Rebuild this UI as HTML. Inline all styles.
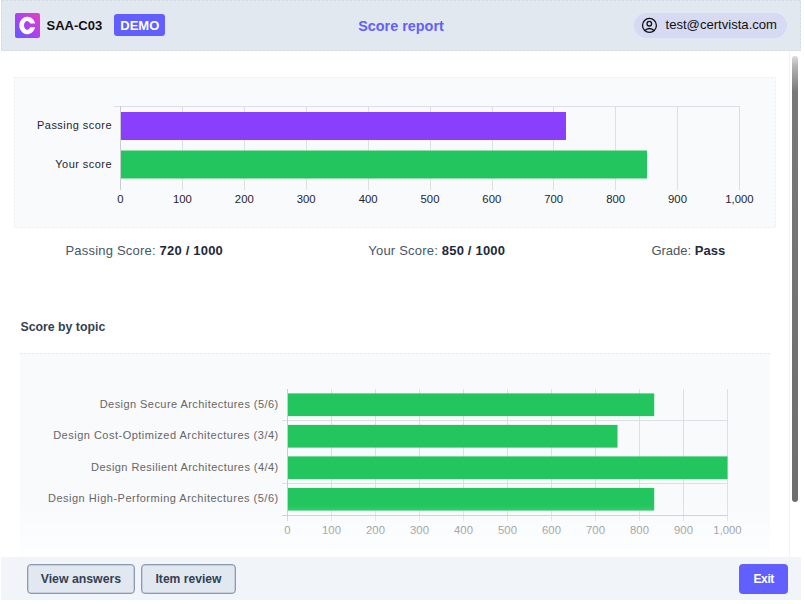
<!DOCTYPE html>
<html>
<head>
<meta charset="utf-8">
<style>
html,body{margin:0;padding:0;width:805px;height:604px;overflow:hidden;background:#fff;font-family:"Liberation Sans",sans-serif;}
.abs{position:absolute;}
#header{left:1px;top:0;width:800px;height:51px;background:#e2e8f0;}
#logo{left:15px;top:13px;width:25px;height:25px;border-radius:2px;background:linear-gradient(45deg,#5a5cff 0%,#a742f5 45%,#e93fc0 100%);}
#badge{left:114px;top:14px;width:51px;height:22px;border-radius:3px;background:#615fff;}
#pill{left:634px;top:13px;width:153px;height:25px;border-radius:13px;background:#d6daf3;}
#card1{left:14px;top:77px;width:762px;height:151px;background:#f8fafc;}
#card2{left:20px;top:353px;width:750px;height:220px;background:#f8fafc;}
#fade{left:0;top:505px;width:790px;height:52px;background:linear-gradient(to bottom,rgba(255,255,255,0),rgba(255,255,255,0.85));}
#footer{left:1px;top:557px;width:800px;height:43px;background:#f1f5f9;}
.btn{top:564px;height:28px;border:1px solid #8c9bb0;border-radius:4px;background:#e2e8f0;box-shadow:inset 0 0 0 0.5px #a9b5c6;}
#exit{left:739px;top:564px;width:49px;height:30px;border-radius:4px;background:#615fff;}
#sbtrack{left:789px;top:51px;width:1px;height:506px;background:#f3f3f3;}
#thumb{left:792px;top:56px;width:6px;height:446px;border-radius:3px;background:linear-gradient(to bottom,#dcdcdc 0px,#b4b4b4 10px,#787878 36px,#6e6e6e 100%);}
svg{position:absolute;left:0;top:0;}
</style>
</head>
<body>
<div id="header" class="abs"></div>
<div id="logo" class="abs"></div>
<div id="badge" class="abs"></div>
<div id="pill" class="abs"></div>

<div id="card1" class="abs"></div>
<div id="card2" class="abs"></div>

<svg width="805" height="604" viewBox="0 0 805 604" font-family="Liberation Sans, sans-serif">
  <g fill="none" stroke-dasharray="2.5 1.5" stroke-width="1">
    <rect x="1.5" y="0.5" width="799" height="50" stroke="#d6dce7"/>
    <rect x="14.5" y="77.5" width="761" height="150" stroke="#edf1f6"/>
    <line x1="20" y1="353.5" x2="770" y2="353.5" stroke="#e3e9f1"/>
  </g>
  <!-- logo C -->
  <path d="M35.12 23.6 A8 8.8 0 1 0 35.12 27.3 L30.09 27.3 A3.2 4.4 0 1 1 30.12 23.6 Z" fill="#fff"/>
  <text x="46.5" y="30" font-size="13" font-weight="700" fill="#111">SAA-C03</text>
  <text x="120.3" y="29.5" font-size="13" font-weight="700" fill="#fff">DEMO</text>
  <text x="401" y="30.6" text-anchor="middle" font-size="14.4" font-weight="700" fill="#615fff">Score report</text>
  <!-- user icon -->
  <g fill="none" stroke="#111" stroke-width="1.3">
    <circle cx="649.45" cy="25.4" r="6.95"/>
    <circle cx="649.3" cy="23.7" r="2.3"/>
    <path d="M644.3 30.9 Q649.4 26.1 654.6 30.9"/>
  </g>
  <text x="665.5" y="29" font-size="13.1" fill="#111">test@certvista.com</text>

  <!-- chart 1 -->
  <g stroke="#dcdfe3" stroke-width="1" shape-rendering="crispEdges">
    <line x1="114" y1="106.5" x2="740" y2="106.5"/>
    <line x1="182.5" y1="106" x2="182.5" y2="190"/>
    <line x1="244.5" y1="106" x2="244.5" y2="190"/>
    <line x1="306.5" y1="106" x2="306.5" y2="190"/>
    <line x1="368.5" y1="106" x2="368.5" y2="190"/>
    <line x1="430.5" y1="106" x2="430.5" y2="190"/>
    <line x1="492.5" y1="106" x2="492.5" y2="190"/>
    <line x1="553.5" y1="106" x2="553.5" y2="190"/>
    <line x1="615.5" y1="106" x2="615.5" y2="190"/>
    <line x1="677.5" y1="106" x2="677.5" y2="190"/>
    <line x1="739.5" y1="106" x2="739.5" y2="190"/>
  </g>
  <rect x="121" y="112" width="445" height="28" fill="#8a3ffc"/>
  <rect x="121" y="150.5" width="526" height="28" fill="#22c55e"/>
  <line x1="120.5" y1="106" x2="120.5" y2="190" stroke="#c8cbcf" stroke-width="1" shape-rendering="crispEdges"/>
  <g font-size="11" fill="#1f2430" text-anchor="end" letter-spacing="0.45">
    <text x="112" y="129">Passing score</text>
    <text x="112" y="168.2">Your score</text>
  </g>
  <g font-size="11.3" fill="#1f2430" text-anchor="middle">
    <text x="120.5" y="203">0</text>
    <text x="182.4" y="203">100</text>
    <text x="244.3" y="203">200</text>
    <text x="306.2" y="203">300</text>
    <text x="368.1" y="203">400</text>
    <text x="430" y="203">500</text>
    <text x="491.8" y="203">600</text>
    <text x="553.7" y="203">700</text>
    <text x="615.6" y="203">800</text>
    <text x="677.5" y="203">900</text>
    <text x="739.4" y="203">1,000</text>
  </g>

  <!-- summary -->
  <g font-size="13" fill="#475569" letter-spacing="0.2">
    <text x="65.5" y="255">Passing Score: <tspan font-weight="700" fill="#1e293b">720 / 1000</tspan></text>
    <text x="368.3" y="255">Your Score: <tspan font-weight="700" fill="#1e293b">850 / 1000</tspan></text>
    <text x="651.4" y="255" letter-spacing="0">Grade: <tspan font-weight="700" fill="#1e293b">Pass</tspan></text>
  </g>
  <text x="20.5" y="331" font-size="12.3" font-weight="700" fill="#334155">Score by topic</text>

  <!-- chart 2 -->
  <g stroke="#dcdfe3" stroke-width="1" shape-rendering="crispEdges">
    <line x1="281.5" y1="420.5" x2="728" y2="420.5"/>
    <line x1="281.5" y1="483.5" x2="728" y2="483.5"/>
    <line x1="331.5" y1="389" x2="331.5" y2="521"/>
    <line x1="375.5" y1="389" x2="375.5" y2="521"/>
    <line x1="419.5" y1="389" x2="419.5" y2="521"/>
    <line x1="463.5" y1="389" x2="463.5" y2="521"/>
    <line x1="507.5" y1="389" x2="507.5" y2="521"/>
    <line x1="551.5" y1="389" x2="551.5" y2="521"/>
    <line x1="595.5" y1="389" x2="595.5" y2="521"/>
    <line x1="639.5" y1="389" x2="639.5" y2="521"/>
    <line x1="683.5" y1="389" x2="683.5" y2="521"/>
    <line x1="727.5" y1="389" x2="727.5" y2="521"/>
  </g>
  <g fill="#22c55e">
    <rect x="288" y="393.4" width="366.2" height="22.7"/>
    <rect x="288" y="424.9" width="329.5" height="22.7"/>
    <rect x="288" y="456.4" width="439.5" height="22.7"/>
    <rect x="288" y="487.9" width="366.2" height="22.7"/>
  </g>
  <g stroke="#c8cbcf" stroke-width="1" shape-rendering="crispEdges">
    <line x1="287.5" y1="389" x2="287.5" y2="521"/>
    <line x1="281.5" y1="515.5" x2="728" y2="515.5"/>
  </g>
  <g font-size="11" fill="#666" text-anchor="end" letter-spacing="0.44">
    <text x="278.7" y="407.9">Design Secure Architectures (5/6)</text>
    <text x="278.7" y="439.4" letter-spacing="0.49">Design Cost-Optimized Architectures (3/4)</text>
    <text x="278.7" y="470.9">Design Resilient Architectures (4/4)</text>
    <text x="278.7" y="502.4" letter-spacing="0.5">Design High-Performing Architectures (5/6)</text>
  </g>
  <g font-size="11.3" fill="#666" text-anchor="middle">
    <text x="287.5" y="534">0</text>
    <text x="331.5" y="534">100</text>
    <text x="375.5" y="534">200</text>
    <text x="419.5" y="534">300</text>
    <text x="463.5" y="534">400</text>
    <text x="507.5" y="534">500</text>
    <text x="551.5" y="534">600</text>
    <text x="595.5" y="534">700</text>
    <text x="639.5" y="534">800</text>
    <text x="683.5" y="534">900</text>
    <text x="727.5" y="534">1,000</text>
  </g>
</svg>

<div id="fade" class="abs"></div>
<div id="sbtrack" class="abs"></div>
<div id="thumb" class="abs"></div>

<div id="footer" class="abs"></div>
<div class="btn abs" style="left:27px;width:106px;"></div>
<div class="btn abs" style="left:141px;width:93px;"></div>
<div id="exit" class="abs"></div>
<svg width="805" height="604" viewBox="0 0 805 604" font-family="Liberation Sans, sans-serif" style="pointer-events:none">
  <text x="40.7" y="583" font-size="12.3" font-weight="700" fill="#334155">View answers</text>
  <text x="155.5" y="583" font-size="12.1" font-weight="700" fill="#334155">Item review</text>
  <text x="753.5" y="583" font-size="12" font-weight="700" fill="#fff" letter-spacing="-0.4">Exit</text>
</svg>
</body>
</html>
